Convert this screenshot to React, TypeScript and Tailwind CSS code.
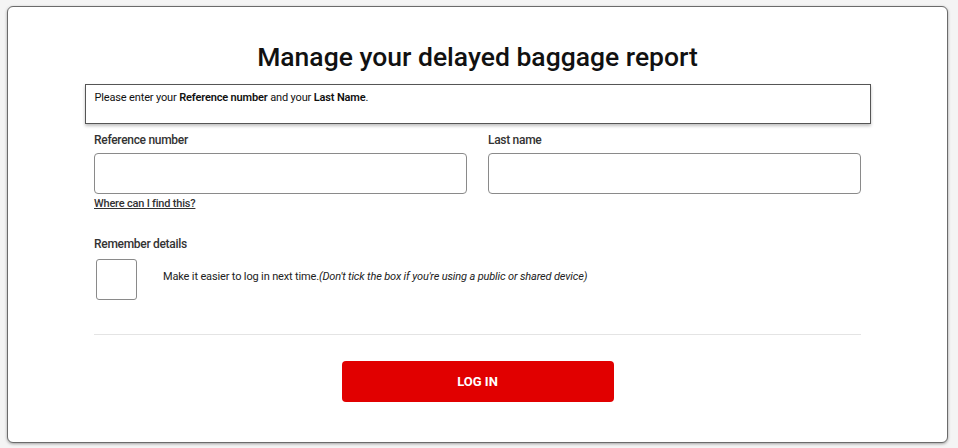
import React from "react";

export default function App() {
  return (
    <div className="w-[958px] h-[448px] bg-[#f4f4f4] pt-[6px] pl-[7px]" style={{ fontFamily: "Roboto, 'Liberation Sans', sans-serif" }}>
      <div className="w-[941px] h-[437px] bg-white border border-[#6b6b6b] rounded-[6px] shadow-[0_1px_3px_rgba(0,0,0,0.35)] flex flex-col items-center">
        <h1 className="mt-[32px] text-[26.5px] leading-[36px] font-medium text-[#111]">
          Manage your delayed baggage report
        </h1>
        <div className="mt-[9px] w-[786px] h-[40px] border border-[#555] shadow-[0_2px_3px_rgba(0,0,0,0.25)] px-[9px] pt-[5px] text-[11px] leading-[16px] tracking-[-0.15px] text-[#111]">
          Please enter your <span className="font-semibold">Reference number</span> and your <span className="font-semibold">Last Name</span>.
        </div>
        <div className="w-[767px] mt-[7px]">
          <div className="grid grid-cols-2 gap-[21px]">
            <div className="flex flex-col">
              <label className="text-[12px] leading-[18px] tracking-[-0.3px] text-[#333] font-medium">Reference number</label>
              <div className="mt-[4px] h-[41px] border border-[#8a8a8a] rounded-[4px]" />
              <a className="mt-[2px] text-[11px] leading-[16px] tracking-[-0.2px] text-[#333] underline font-medium">Where can I find this?</a>
            </div>
            <div className="flex flex-col">
              <label className="text-[12px] leading-[18px] tracking-[-0.3px] text-[#333] font-medium">Last name</label>
              <div className="mt-[4px] h-[41px] border border-[#8a8a8a] rounded-[4px]" />
            </div>
          </div>
          <div className="mt-[23px] text-[12px] leading-[18px] tracking-[-0.3px] text-[#333] font-medium">Remember details</div>
          <div className="mt-[6px] flex items-center">
            <div className="ml-[2px] w-[41px] h-[41px] border border-[#8a8a8a] rounded-[3px]" />
            <div className="ml-[26px] text-[11px] leading-[16px] tracking-[-0.15px] text-[#222] -mt-[6px]">
              Make it easier to log in next time.<span className="italic">(Don't tick the box if you're using a public or shared device)</span>
            </div>
          </div>
          <div className="mt-[34px] h-[1px] bg-[#e4e4e4]" />
          <div className="mt-[26px] flex justify-center">
            <button className="w-[272px] h-[41px] bg-[#e10000] rounded-[4px] text-white text-[13px] font-bold">
              LOG IN
            </button>
          </div>
        </div>
      </div>
    </div>
  );
}
